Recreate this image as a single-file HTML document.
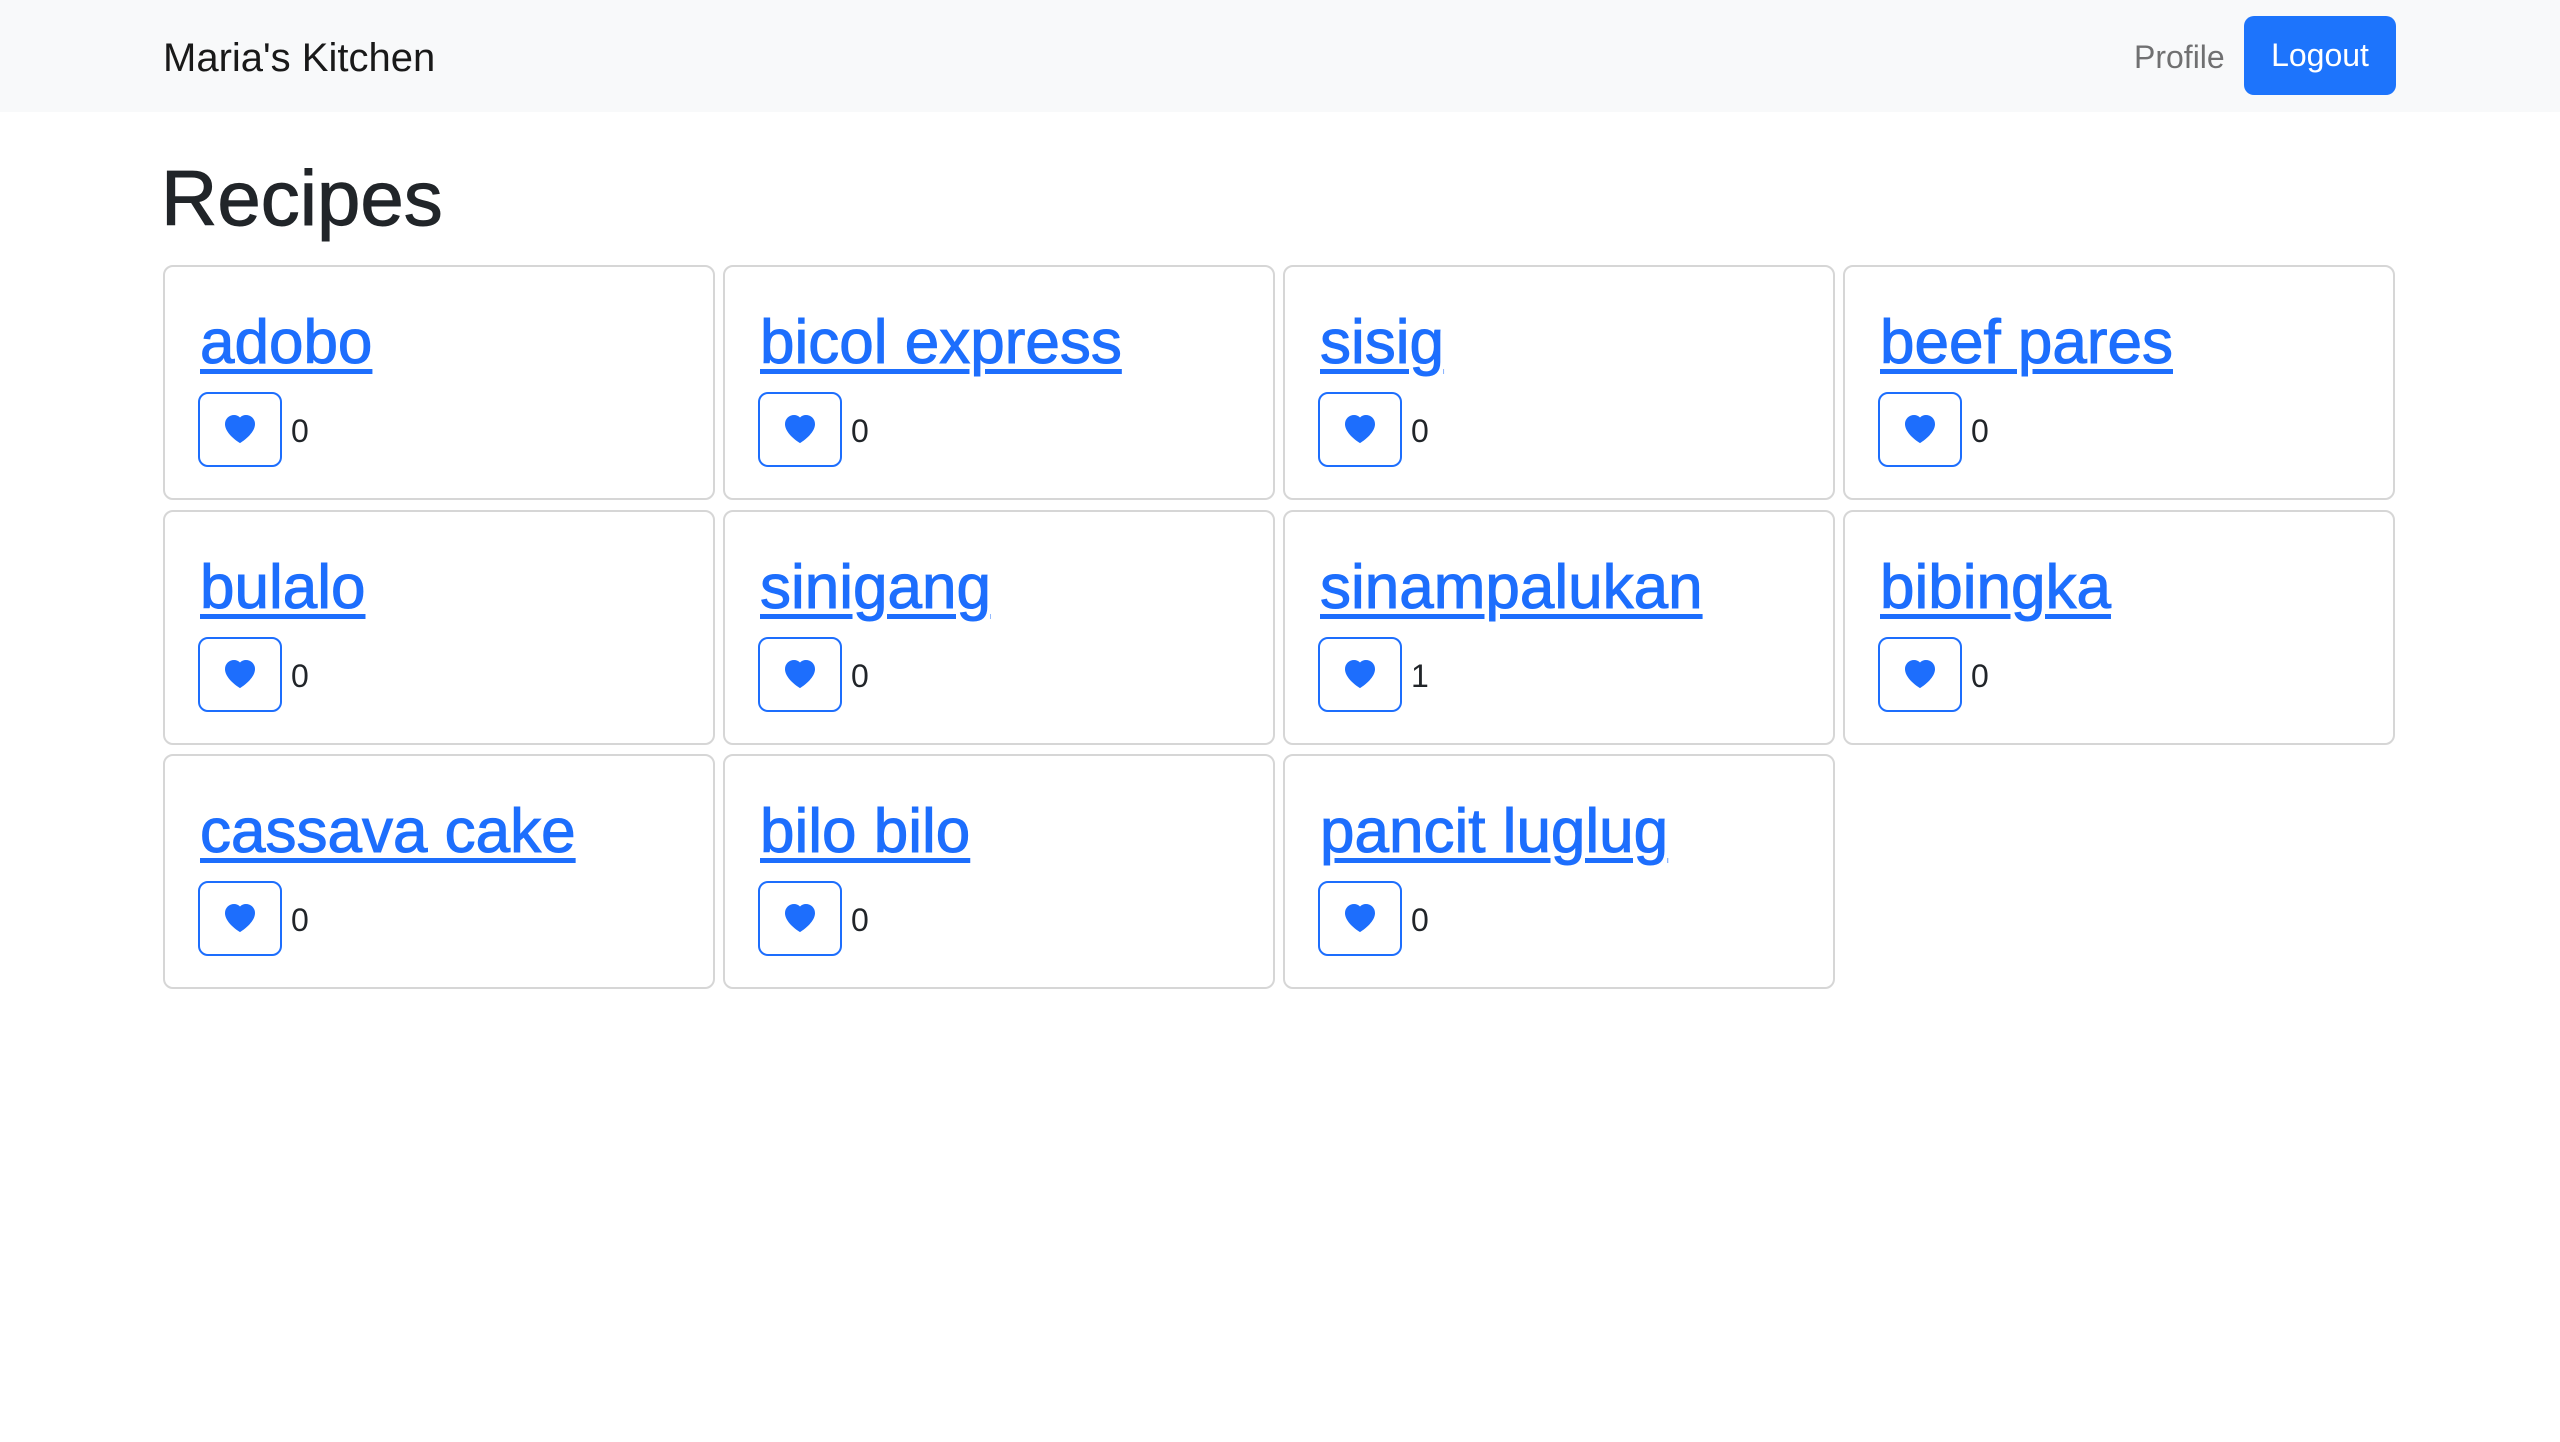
<!DOCTYPE html>
<html><head><meta charset="utf-8"><style>
*{box-sizing:border-box;margin:0;padding:0}
body{width:2560px;height:1442px;background:#fff;font-family:"Liberation Sans",Arial,sans-serif;color:#212529;position:relative;overflow:hidden}
.nav{position:absolute;left:0;top:0;width:2560px;height:112px;background:#f8f9fa}
.brand{position:absolute;left:163px;top:35px;font-size:40px;line-height:46px;color:#000000e6}
.profile{position:absolute;left:2134px;top:39px;font-size:32px;line-height:36px;color:rgba(0,0,0,.55)}
.logout{position:absolute;left:2244px;top:16px;width:152px;height:79px;background:#1d74fc;border-radius:10px;color:#fff;font-size:32px;line-height:79px;text-align:center}
h1{position:absolute;left:161px;top:153px;font-size:78px;line-height:90px;font-weight:normal;-webkit-text-stroke:1px #212529}
.card{position:absolute;width:552px;height:235px;border:2px solid #d6d6d6;border-radius:10px;background:#fff}
.card a{position:absolute;left:35px;top:40px;font-size:62px;line-height:72px;color:#1d6efd;text-decoration:underline;text-decoration-thickness:5px;text-underline-offset:6px;font-weight:normal;-webkit-text-stroke:1px #1d6efd;white-space:nowrap}
.btn{position:absolute;left:33px;top:125px;width:84px;height:75px;border:2px solid #1d6efd;border-radius:10px;display:flex;align-items:center;justify-content:center}
.cnt{position:absolute;left:126px;top:146px;font-size:32px;line-height:36px;color:#212529}
</style></head><body>
<div class="nav">
<div class="brand">Maria's Kitchen</div>
<div class="profile">Profile</div>
<div class="logout">Logout</div>
</div>
<h1>Recipes</h1>

<div class="card" style="left:163px;top:265px"><a>adobo</a><div class="btn"><svg width="30" height="30" viewBox="0 0 16 16"><path fill="#1d6efd" fill-rule="evenodd" d="M8 1.314C12.438-3.248 23.534 4.735 8 15-7.534 4.736 3.562-3.248 8 1.314z"/></svg></div><div class="cnt">0</div></div>
<div class="card" style="left:723px;top:265px"><a>bicol express</a><div class="btn"><svg width="30" height="30" viewBox="0 0 16 16"><path fill="#1d6efd" fill-rule="evenodd" d="M8 1.314C12.438-3.248 23.534 4.735 8 15-7.534 4.736 3.562-3.248 8 1.314z"/></svg></div><div class="cnt">0</div></div>
<div class="card" style="left:1283px;top:265px"><a>sisig</a><div class="btn"><svg width="30" height="30" viewBox="0 0 16 16"><path fill="#1d6efd" fill-rule="evenodd" d="M8 1.314C12.438-3.248 23.534 4.735 8 15-7.534 4.736 3.562-3.248 8 1.314z"/></svg></div><div class="cnt">0</div></div>
<div class="card" style="left:1843px;top:265px"><a>beef pares</a><div class="btn"><svg width="30" height="30" viewBox="0 0 16 16"><path fill="#1d6efd" fill-rule="evenodd" d="M8 1.314C12.438-3.248 23.534 4.735 8 15-7.534 4.736 3.562-3.248 8 1.314z"/></svg></div><div class="cnt">0</div></div>

<div class="card" style="left:163px;top:510px"><a>bulalo</a><div class="btn"><svg width="30" height="30" viewBox="0 0 16 16"><path fill="#1d6efd" fill-rule="evenodd" d="M8 1.314C12.438-3.248 23.534 4.735 8 15-7.534 4.736 3.562-3.248 8 1.314z"/></svg></div><div class="cnt">0</div></div>
<div class="card" style="left:723px;top:510px"><a>sinigang</a><div class="btn"><svg width="30" height="30" viewBox="0 0 16 16"><path fill="#1d6efd" fill-rule="evenodd" d="M8 1.314C12.438-3.248 23.534 4.735 8 15-7.534 4.736 3.562-3.248 8 1.314z"/></svg></div><div class="cnt">0</div></div>
<div class="card" style="left:1283px;top:510px"><a>sinampalukan</a><div class="btn"><svg width="30" height="30" viewBox="0 0 16 16"><path fill="#1d6efd" fill-rule="evenodd" d="M8 1.314C12.438-3.248 23.534 4.735 8 15-7.534 4.736 3.562-3.248 8 1.314z"/></svg></div><div class="cnt">1</div></div>
<div class="card" style="left:1843px;top:510px"><a>bibingka</a><div class="btn"><svg width="30" height="30" viewBox="0 0 16 16"><path fill="#1d6efd" fill-rule="evenodd" d="M8 1.314C12.438-3.248 23.534 4.735 8 15-7.534 4.736 3.562-3.248 8 1.314z"/></svg></div><div class="cnt">0</div></div>

<div class="card" style="left:163px;top:754px"><a>cassava cake</a><div class="btn"><svg width="30" height="30" viewBox="0 0 16 16"><path fill="#1d6efd" fill-rule="evenodd" d="M8 1.314C12.438-3.248 23.534 4.735 8 15-7.534 4.736 3.562-3.248 8 1.314z"/></svg></div><div class="cnt">0</div></div>
<div class="card" style="left:723px;top:754px"><a>bilo bilo</a><div class="btn"><svg width="30" height="30" viewBox="0 0 16 16"><path fill="#1d6efd" fill-rule="evenodd" d="M8 1.314C12.438-3.248 23.534 4.735 8 15-7.534 4.736 3.562-3.248 8 1.314z"/></svg></div><div class="cnt">0</div></div>
<div class="card" style="left:1283px;top:754px"><a>pancit luglug</a><div class="btn"><svg width="30" height="30" viewBox="0 0 16 16"><path fill="#1d6efd" fill-rule="evenodd" d="M8 1.314C12.438-3.248 23.534 4.735 8 15-7.534 4.736 3.562-3.248 8 1.314z"/></svg></div><div class="cnt">0</div></div>
</body></html>
